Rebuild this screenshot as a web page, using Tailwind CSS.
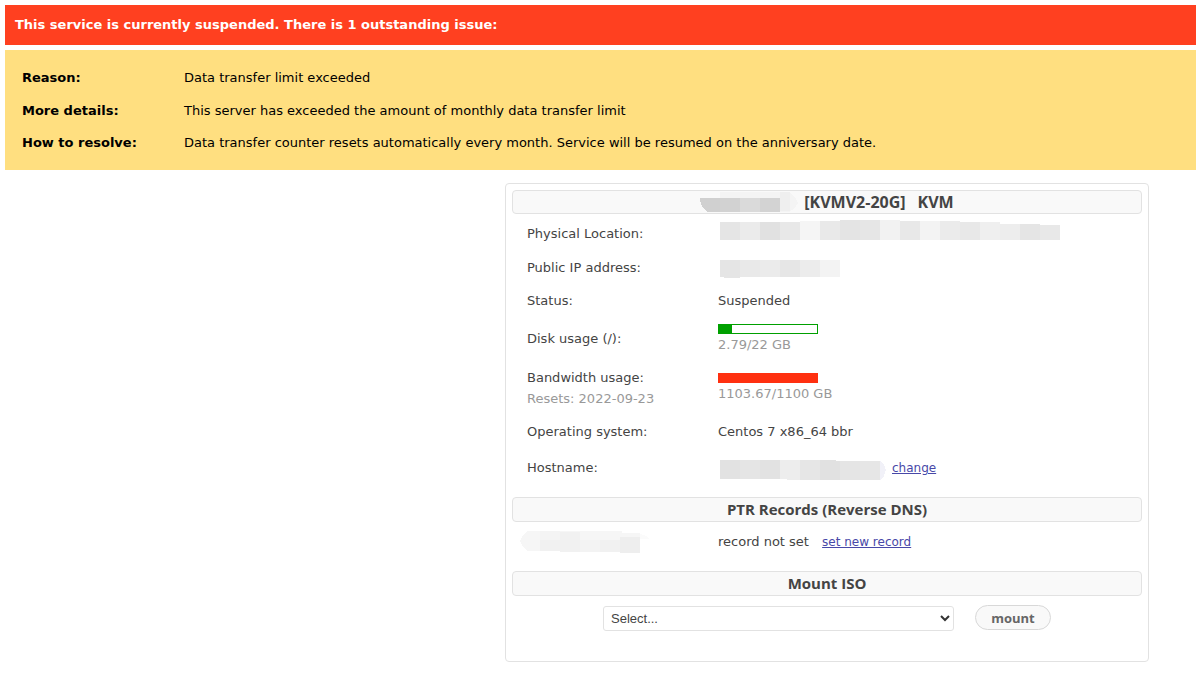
<!DOCTYPE html>
<html lang="en">
<head>
<meta charset="utf-8">
<meta name="viewport" content="width=device-width, initial-scale=1">
<title>Service suspended</title>
<script src="https://cdn.jsdelivr.net/npm/@tailwindcss/browser@4"></script>
</head>
<body class="bg-white font-[Verdana,'DejaVu_Sans',sans-serif] text-[13px] leading-5 text-[#444]">
<section class="pt-[5px] pl-[5px]" role="alert">
  <h1 class="flex min-h-10 items-center bg-[#ff4020] px-2.5 text-[13px] font-bold text-white">This service is currently suspended. There is 1 outstanding issue:</h1>
  <div class="mt-[5px] bg-[#ffdf80] px-[17px] py-[11px] text-black">
    <table class="w-full text-left">
      <tbody>
        <tr class="h-[33px]"><th scope="row" class="w-[162px] font-bold">Reason:</th><td>Data transfer limit exceeded</td></tr>
        <tr class="h-[33px]"><th scope="row" class="font-bold">More details:</th><td>This server has exceeded the amount of monthly data transfer limit</td></tr>
        <tr class="h-8"><th scope="row" class="font-bold">How to resolve:</th><td>Data transfer counter resets automatically every month. Service will be resumed on the anniversary date.</td></tr>
      </tbody>
    </table>
  </div>
</section>

<main class="mt-[13px] mr-[47px] mb-6 ml-auto max-w-[644px] rounded border border-[#e2e2e2] p-1.5 pb-[30px]">
  <h2 class="flex h-6 items-center justify-center rounded border border-[#e2e2e2] bg-[#f9f9f9] font-['Segoe_UI','Open_Sans',sans-serif] text-base leading-5 font-bold">
    <svg class="mr-1.5 h-5 w-[98px]" viewBox="0 0 98 20" aria-hidden="true" shape-rendering="crispEdges">
      <path fill="#f4f4f4" d="M20 0H87l5 2 4 5 2 4-3 5-6 4H20z"/>
      <path fill="#d0d0d0" d="M0 6H20V20H8L3 16 0 9z"/>
      <path fill="#d2d2d2" d="M20 6H40V20H20z"/><path fill="#dadada" d="M40 6H60V20H40z"/><path fill="#d3d3d3" d="M60 6H80V20H60z"/><path fill="#efefef" d="M80 0h10v19H80z"/>
    </svg>
    <span>[KVMV2-20G]</span><span class="ml-3">KVM</span>
  </h2>
  <table class="mt-[3px] w-full text-left">
    <tbody>
      <tr class="h-[34px]"><th scope="row" class="w-[206px] pl-[15px] font-normal">Physical Location:</th>
        <td><svg class="mb-2 h-5 w-[342px]" viewBox="0 0 342 20" aria-label="Hidden" role="img" shape-rendering="crispEdges">
          <path fill="#e5e5e5" d="M2 2H22V20H2z"/><path fill="#ebebeb" d="M22 2H42V20H22z"/><path fill="#e1e1e1" d="M42 2H62V20H42z"/><path fill="#e8e8e8" d="M62 2H82V20H62z"/><path fill="#f5f5f5" d="M82 1H102V20H82z"/><path fill="#e9e9e9" d="M102 1H122V20H102z"/><path fill="#e4e4e4" d="M122 0H142V20H122z"/><path fill="#e6e6e6" d="M142 0H162V20H142z"/><path fill="#f2f2f2" d="M162 0H182V20H162z"/><path fill="#e8e8e8" d="M182 1H202V20H182z"/><path fill="#f3f3f3" d="M202 1H222V20H202z"/><path fill="#ebebeb" d="M222 1H242V20H222z"/><path fill="#e8e8e8" d="M242 2H262V20H242z"/><path fill="#efefef" d="M262 2H282V20H262z"/><path fill="#ededed" d="M282 4H302V20H282z"/><path fill="#e5e5e5" d="M302 4H322V20H302z"/><path fill="#e8e8e8" d="M322 5H342V20H322z"/>
        </svg></td></tr>
      <tr class="h-[34px]"><th scope="row" class="pl-[15px] font-normal">Public IP address:</th>
        <td><svg class="h-5 w-[122px]" viewBox="0 0 122 20" aria-label="Hidden" role="img" shape-rendering="crispEdges">
          <path fill="#e5e5e5" d="M2 2H22V20H10L2 19z"/><path fill="#e9e9e9" d="M22 2H42V19H22z"/><path fill="#ebebeb" d="M42 2H62V19H42z"/><path fill="#e6e6e6" d="M62 2H82V19H62z"/><path fill="#ececec" d="M82 2H102V19H82z"/><path fill="#f3f3f3" d="M102 2H122V19H102z"/>
        </svg></td></tr>
      <tr class="h-8"><th scope="row" class="pl-[15px] font-normal">Status:</th><td>Suspended</td></tr>
      <tr class="h-11"><th scope="row" class="pl-[15px] font-normal">Disk usage (/):</th>
        <td class="text-[#999]"><div class="h-2.5 w-[100px] border border-[#00a000]"><div class="h-full bg-[#00a000]" style="width:13%"></div></div><div class="mt-px">2.79/22 GB</div></td></tr>
      <tr class="h-[54px]"><th scope="row" class="pl-[15px] leading-[21px] font-normal">Bandwidth usage:<br><span class="text-[#999]">Resets: 2022-09-23</span></th>
        <td class="text-[#999]"><div class="h-2.5 w-[100px] bg-[#ff3010]"></div><div class="mt-px">1103.67/1100 GB</div></td></tr>
      <tr class="h-[33px]"><th scope="row" class="pl-[15px] font-normal">Operating system:</th><td>Centos 7 x86_64 bbr</td></tr>
      <tr class="h-10"><th scope="row" class="pl-[15px] font-normal">Hostname:</th>
        <td><div class="flex items-center"><svg class="mt-1 mr-1.5 h-5 w-[168px]" viewBox="0 0 168 20" aria-label="Hidden" role="img" shape-rendering="crispEdges">
          <path fill="#e2e2e2" d="M2 0H22V19H2z"/><path fill="#e5e5e5" d="M22 0H42V19H22z"/><path fill="#e2e2e2" d="M42 0H62V19H42z"/><path fill="#ededed" d="M62 0H82V20H69V19H62z"/><path fill="#e6e6e6" d="M82 0H102V20H82z"/><path fill="#e1e1e1" d="M102 0H118V1H122V20H102z"/><path fill="#e5e5e5" d="M122 1H142V20H122z"/><path fill="#e6e6e6" d="M142 1H162V20H142z"/><path fill="#f1f1f8" d="M162 1l4 3 2 6-2 6-4 4z"/>
        </svg><a href="#" class="text-xs text-[#4848a8] underline">change</a></div></td></tr>
    </tbody>
  </table>
  <h2 class="mt-[9px] flex h-[25px] items-center justify-center rounded border border-[#e2e2e2] bg-[#f9f9f9] pb-0.5 font-['Segoe_UI','Open_Sans',sans-serif] text-[15px] leading-5 font-bold">PTR Records (Reverse DNS)</h2>
  <table class="w-full text-left">
    <tbody>
      <tr class="h-[39px]"><th scope="row" class="w-[206px] pl-2 font-normal"><svg class="h-[22px] w-[130px]" viewBox="0 0 130 22" aria-label="Hidden" role="img" shape-rendering="crispEdges">
          <path fill="#f6f6f6" d="M8 0H102V2H120V22H100V20H8L3 16 0 10 3 4z"/>
          <path fill="#fbfbfb" d="M120 3l6 2 3 3h-9z"/>
          <path fill="#f1f1f1" d="M20 9H40V20H20z"/><path fill="#f4f4f4" d="M20 0H40V9H20z"/><path fill="#f1f1f1" d="M40 1H60V21H40z"/><path fill="#f3f3f3" d="M60 9H80V21H60z"/><path fill="#f1f1f1" d="M80 9H100V21H80z"/><path fill="#eee" d="M100 6H120V22H100z"/>
        </svg></th><td>record not set <a href="#" class="ml-[9px] text-xs text-[#4848a8] underline">set new record</a></td></tr>
    </tbody>
  </table>
  <h2 class="mt-2.5 flex h-[25px] items-center justify-center rounded border border-[#e2e2e2] bg-[#f9f9f9] pb-0.5 font-['Segoe_UI','Open_Sans',sans-serif] text-[15px] leading-5 font-bold">Mount ISO</h2>
  <form class="mt-[9px] flex items-start justify-center gap-[21px]">
    <div class="relative mt-px w-[351px]">
      <select aria-label="ISO image" class="block h-[25px] w-full appearance-none rounded-[3px] border border-[#e2e2e2] bg-white pl-[7px] font-[Arial,'Liberation_Sans',sans-serif] text-[13px]"><option>Select...</option></select>
      <svg class="pointer-events-none absolute top-[9px] right-1 h-[7px] w-2.5" viewBox="0 0 10 7" fill="none" stroke="#333" stroke-width="2" aria-hidden="true"><path d="M1 1l4 4 4-4"/></svg>
    </div>
    <button type="button" class="h-[25px] w-[76px] rounded-full border border-[#d8d8d8] bg-[#f9f9f9] font-['Segoe_UI','Open_Sans',sans-serif] text-[13px] leading-5 font-bold text-[#666]">mount</button>
  </form>
</main>
</body>
</html>
